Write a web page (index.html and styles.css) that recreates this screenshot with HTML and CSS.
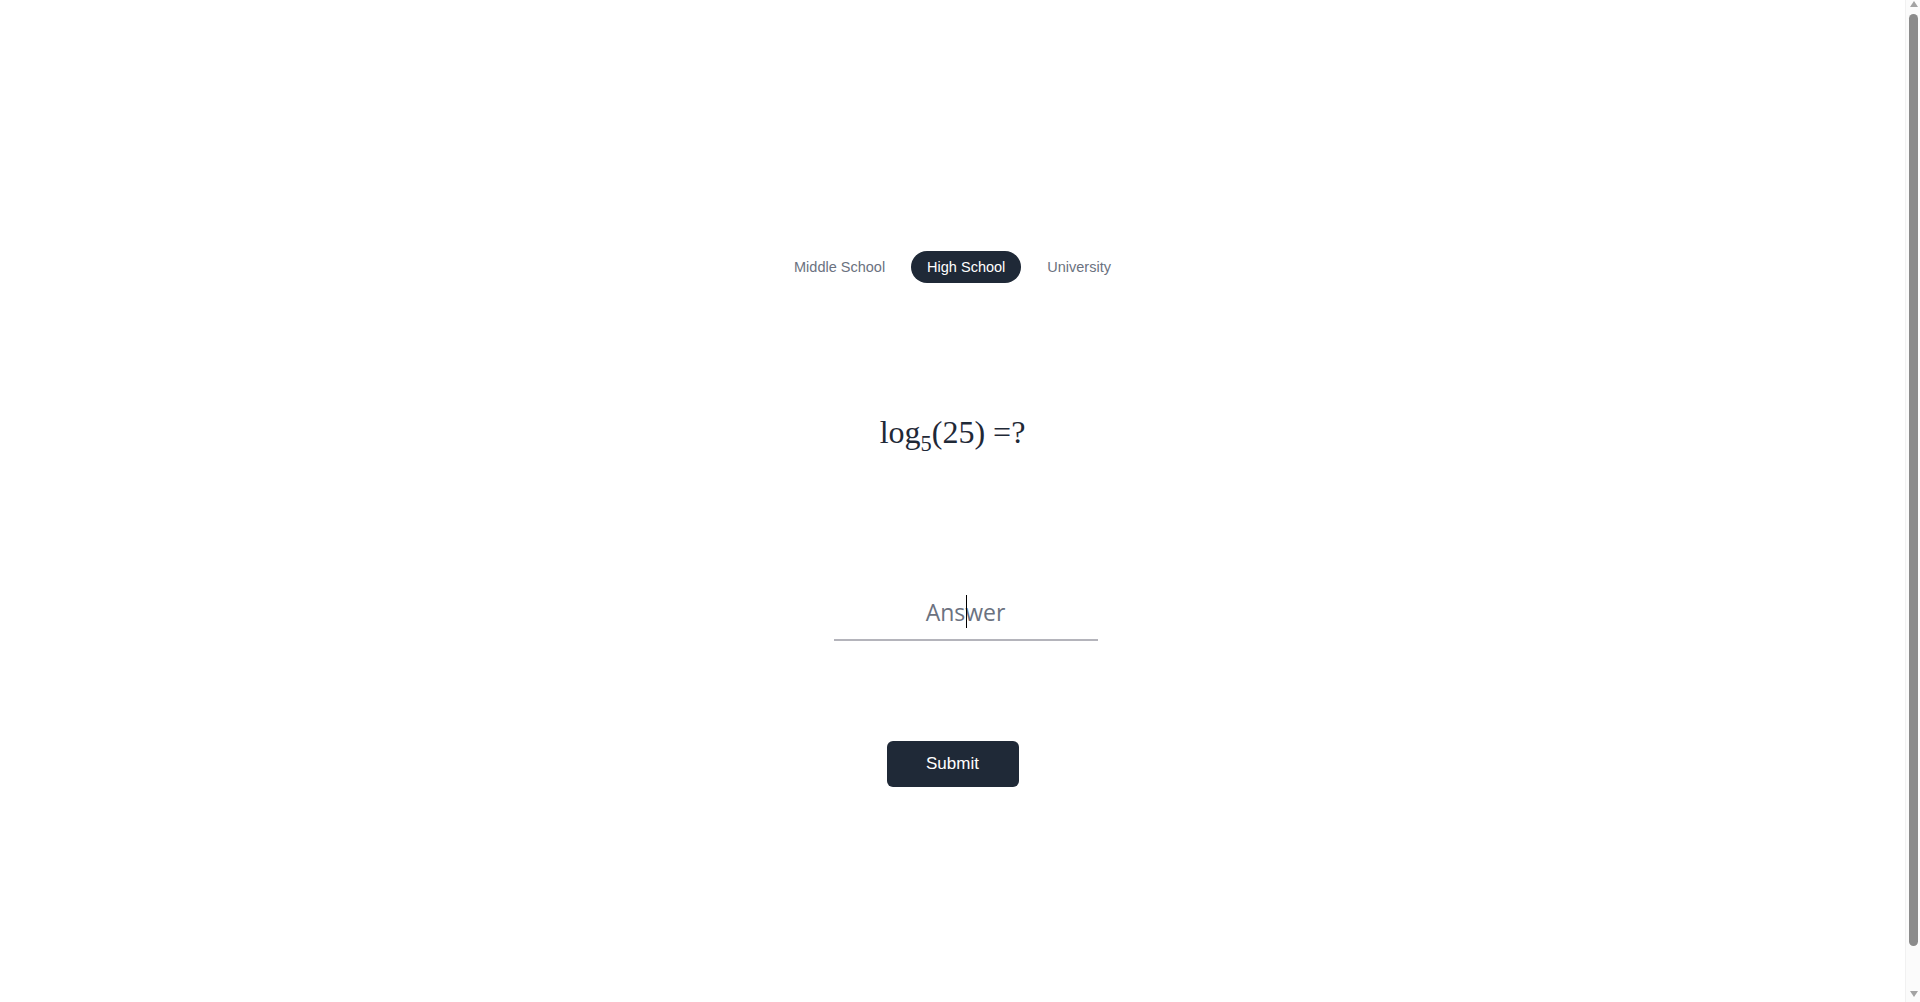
FILE: index.html
```html
<!DOCTYPE html>
<html lang="en">
<head>
<meta charset="utf-8">
<title>Math Quiz</title>
<link rel="stylesheet" href="styles.css">
</head>
<body>
<div class="app">
  <nav class="levels">
    <button class="level">Middle School</button>
    <button class="level active">High School</button>
    <button class="level">University</button>
  </nav>
  <div class="question">log<sub class="sub">5</sub>(25) =?</div>
  <label class="field">
    <input class="answer" type="text" placeholder="Answer">
  </label>
  <button class="submit">Submit</button>
</div>
<div class="scrollbar" aria-hidden="true">
  <span class="arrow up"></span>
  <span class="thumb"></span>
  <span class="arrow down"></span>
</div>
</body>
</html>
```
FILE: styles.css
```css
html, body {
  margin: 0;
  padding: 0;
  background: #ffffff;
}
body {
  font-family: "Liberation Sans", Arial, sans-serif;
  color: #1f2937;
}
.app {
  min-height: 1002px;
  box-sizing: border-box;
  padding-top: 251px;
  padding-right: 15px;
  display: flex;
  flex-direction: column;
  align-items: center;
}
.levels {
  display: flex;
  gap: 10px;
  height: 32px;
}
.level {
  border: 0;
  background: transparent;
  color: #6b7280;
  font-family: "Liberation Sans", Arial, sans-serif;
  font-size: 14.5px;
  padding: 0 16px;
  height: 32px;
  border-radius: 16px;
  cursor: pointer;
}
.level.active {
  background: #1f2937;
  color: #ffffff;
}
.question {
  margin-top: 125px;
  height: 48px;
  line-height: 48px;
  font-family: "Liberation Serif", "Times New Roman", serif;
  font-size: 32px;
  color: #1f2937;
}
.sub {
  font-size: 0.7em;
  line-height: 0;
  vertical-align: -8px;
}
.field {
  position: relative;
  display: block;
  margin-top: 137px;
  margin-left: 26px;
  width: 264px;
  height: 48px;
}
.field::after {
  content: "";
  position: absolute;
  left: 132px;
  top: 2px;
  width: 1px;
  height: 33px;
  background: #000000;
}
.answer {
  display: block;
  width: 264px;
  height: 48px;
  box-sizing: border-box;
  border: 0;
  border-bottom: 2px solid #b4b4bb;
  outline: none;
  text-align: center;
  font-family: "Open Sans", "Segoe UI", sans-serif;
  font-size: 23px;
  color: #1f2937;
  caret-color: transparent;
  background: transparent;
  padding: 0 0 8px 0;
}
.answer::placeholder {
  color: #6b7280;
  opacity: 1;
}
.submit {
  margin-top: 100px;
  width: 132px;
  height: 46px;
  border: 0;
  border-radius: 6px;
  background: #1f2937;
  color: #ffffff;
  font-family: "Liberation Sans", Arial, sans-serif;
  font-size: 17px;
  cursor: pointer;
}
.scrollbar {
  position: fixed;
  top: 0;
  right: 0;
  width: 15px;
  height: 100vh;
  box-sizing: border-box;
  background: #fbfbfb;
  border-left: 1px solid #f1f1f1;
  display: flex;
  flex-direction: column;
  align-items: center;
}
.arrow {
  width: 0;
  height: 0;
  border-left: 4.5px solid transparent;
  border-right: 4.5px solid transparent;
  margin-left: 1px;
}
.arrow.up {
  margin-top: 1px;
  border-bottom: 6px solid #a3a3a3;
}
.arrow.down {
  margin-top: auto;
  margin-bottom: 5px;
  border-top: 6px solid #a3a3a3;
}
.thumb {
  margin-top: 7px;
  margin-left: 1px;
  width: 9px;
  height: 932px;
  border-radius: 5px;
  background: #8b8b8b;
}
```
